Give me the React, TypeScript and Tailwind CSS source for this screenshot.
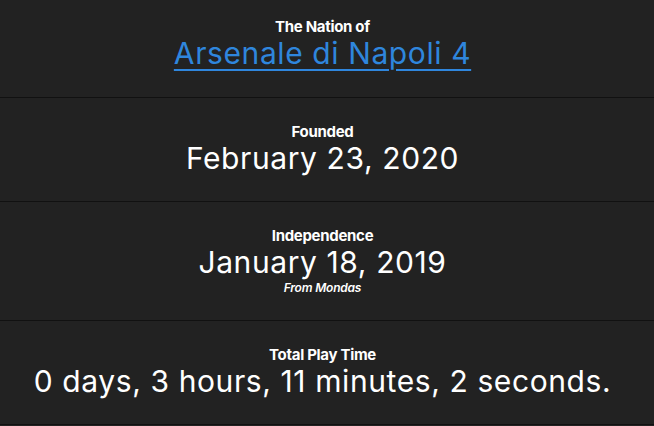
import React from "react";

function Section({ label, children, first }: { label: string; children: React.ReactNode; first?: boolean }) {
  return (
    <div
      className={
        first
          ? "flex flex-col items-center border-b border-[#111111] pt-[19px] pb-[26px] pr-[9px]"
          : "flex flex-col items-center border-b border-[#111111] pt-[26px] pb-[25px] pr-[9px]"
      }
    >
      <div className="text-[15px] leading-[16px] font-bold text-white tracking-[-0.3px]">{label}</div>
      {children}
    </div>
  );
}

export default function App() {
  return (
    <div className="min-h-[426px] w-full bg-[#222222] text-white" style={{ fontFamily: "Inter, 'Liberation Sans', sans-serif" }}>
      <Section label="The Nation of" first>
        <a href="#" className="text-[30px] leading-[36px] tracking-[0.6px] text-[#2f86dd] underline underline-offset-[5px] decoration-2">
          Arsenale di Napoli 4
        </a>
      </Section>
      <Section label="Founded">
        <div className="text-[30px] leading-[36px] tracking-[0.6px]">February 23, 2020</div>
      </Section>
      <div className="flex flex-col items-center border-b border-[#111111] pt-[26px] pb-[24px] pr-[9px]">
        <div className="text-[15px] leading-[16px] font-bold text-white tracking-[-0.3px]">Independence</div>
        <div className="text-[30px] leading-[36px] tracking-[0.6px]">January 18, 2019</div>
        <div className="text-[12px] leading-[16px] italic font-semibold tracking-[-0.2px]">From Mondas</div>
      </div>
      <Section label="Total Play Time">
        <div className="text-[30px] leading-[36px] tracking-[0.6px]">0 days, 3 hours, 11 minutes, 2 seconds.</div>
      </Section>
    </div>
  );
}
